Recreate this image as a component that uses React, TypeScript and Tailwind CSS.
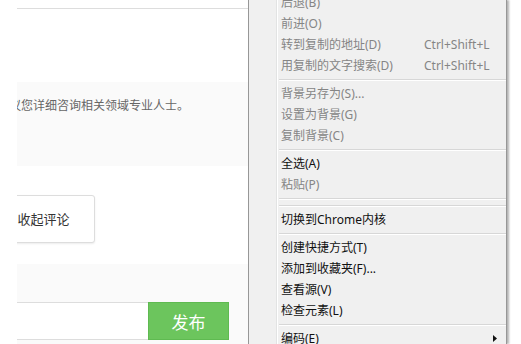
type Item = { label?: string; key?: string; off?: boolean; sep?: boolean; sub?: boolean };

const MENU: Item[] = [
  { label: "后退(B)", off: true },
  { label: "前进(O)", off: true },
  { label: "转到复制的地址(D)", key: "Ctrl+Shift+L", off: true },
  { label: "用复制的文字搜索(D)", key: "Ctrl+Shift+L", off: true },
  { sep: true },
  { label: "背景另存为(S)...", off: true },
  { label: "设置为背景(G)", off: true },
  { label: "复制背景(C)", off: true },
  { sep: true },
  { label: "全选(A)" },
  { label: "粘贴(P)", off: true },
  { sep: true },
  { sep: true },
  { label: "切换到Chrome内核" },
  { sep: true },
  { label: "创建快捷方式(T)" },
  { label: "添加到收藏夹(F)..." },
  { label: "查看源(V)" },
  { label: "检查元素(L)" },
  { sep: true },
  { label: "编码(E)", sub: true },
];

function ContextMenu() {
  return (
    <div className="absolute left-[248px] top-0 w-[259px] h-[344px] overflow-hidden flex bg-[#f0f0f0] border-l border-r border-[#979797] shadow-[2px_0_2px_rgba(0,0,0,0.3)] font-['Noto_Sans','Noto_Sans_CJK_SC',sans-serif] text-[12px]">
      {/* icon gutter */}
      <div className="w-[28px] shrink-0 border-r border-[#e2e3e3] shadow-[1px_0_0_#ffffff]" />
      <div className="flex-1 ml-px mt-[-8px]">
        {MENU.map((it, i) =>
          it.sep ? (
            <div key={i} className="h-[7px] flex items-center ml-px">
              <div className="w-full h-[2px] border-t border-[#d7d7d7] border-b border-b-white" />
            </div>
          ) : (
            <div
              key={i}
              className={`h-[21px] flex items-center pl-[3px] leading-none ${it.off ? "text-[#858585]" : "text-[#111111]"}`}
            >
              <span className="w-[143px] shrink-0 whitespace-nowrap">{it.label}</span>
              {it.key && <span className="whitespace-nowrap">{it.key}</span>}
              {it.sub && (
                <svg className="ml-auto mr-[9px]" width="4" height="7" viewBox="0 0 4 7">
                  <path d="M0 0 L4 3.5 L0 7 Z" fill="#111111" />
                </svg>
              )}
            </div>
          )
        )}
      </div>
    </div>
  );
}

export default function App() {
  return (
    <div className="relative w-[521px] h-[344px] overflow-hidden bg-white font-['Noto_Sans_CJK_SC',sans-serif]">
      <div className="ml-[17px] w-[231px] h-full overflow-hidden">
        <div className="h-[8px]" />
        <div className="h-[74px] border-t border-[#dddddd]" />

        {/* disclaimer box */}
        <div className="h-[84px] bg-[#fafafa] pt-[16px]">
          <p className="ml-[-20px] whitespace-nowrap text-[12px] leading-[14px] text-[#666666]">
            建议您详细咨询相关领域专业人士。
          </p>
        </div>

        <div className="h-[29px]" />
        <div className="h-[48px]">
          <button className="ml-[-25px] w-[103px] h-[48px] rounded-[3px] border border-[#dddddd] bg-white shadow-[0_1px_2px_rgba(0,0,0,0.08)] text-[13px] text-[#333333]">
            收起评论
          </button>
        </div>
        <div className="h-[21px]" />

        {/* comment input */}
        <div className="h-[80px] bg-[#fafafa] pt-[38px]">
          <div className="flex h-[38px]">
            <div className="w-[131px] bg-white border-t border-b border-[#dddddd]" />
            <button className="w-[81px] bg-[#6cc55d] border border-[#5fba51] text-white text-[17px] leading-none">
              发布
            </button>
          </div>
        </div>
      </div>
      <ContextMenu />
    </div>
  );
}
